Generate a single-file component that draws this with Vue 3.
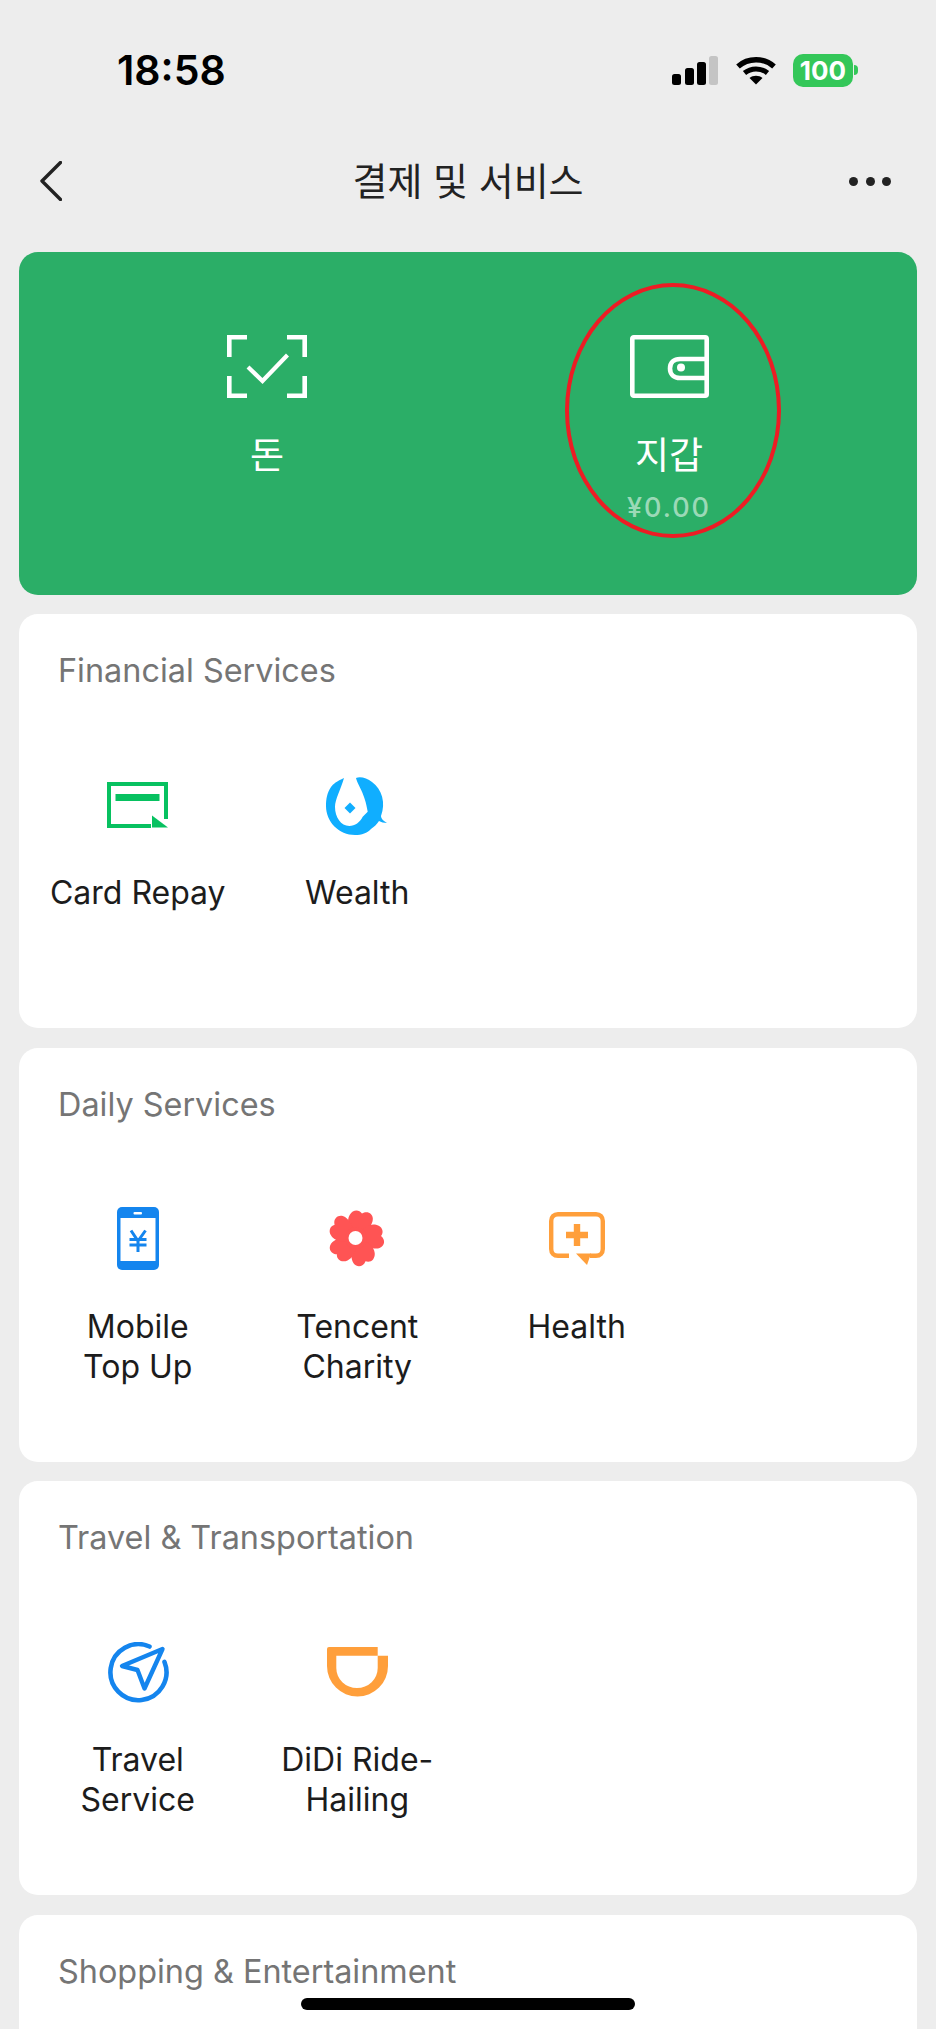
<template>
  <div class="page">
    <div class="status-bar">
      <span class="time">18:58</span>
      <div class="status-icons">
        <svg class="signal" width="46" height="29" viewBox="0 0 46 29">
          <rect x="0" y="18" width="9" height="11" rx="2.5" fill="#000" />
          <rect x="13" y="12" width="9" height="17" rx="2.5" fill="#000" />
          <rect x="25" y="6" width="9" height="23" rx="2.5" fill="#000" />
          <rect x="37" y="0" width="9" height="29" rx="2.5" fill="#c4c4c4" />
        </svg>
        <svg class="wifi" width="40" height="29" viewBox="0 0 40 29" fill="none">
          <path d="M2 10.5C12 1.5 28 1.5 38 10.5" stroke="#000" stroke-width="5.4" />
          <path d="M8.5 17C15 11.5 25 11.5 31.5 17" stroke="#000" stroke-width="5" />
          <path d="M20 28.5L13.5 22C17 19 23 19 26.5 22Z" fill="#000" />
        </svg>
        <div class="battery">
          <span class="battery-level">100</span>
          <span class="battery-nub"></span>
        </div>
      </div>
    </div>

    <div class="nav">
      <svg class="back" width="22" height="40" viewBox="0 0 22 40" fill="none">
        <path d="M20.5 1.5L2 20L20.5 38.5" stroke="#222" stroke-width="3.4" stroke-linecap="round" stroke-linejoin="round" />
      </svg>
      <h1 class="nav-title">결제 및 서비스</h1>
      <div class="more">
        <span></span><span></span><span></span>
      </div>
    </div>

    <div class="pay-card">
      <div class="pay-item">
        <svg width="80" height="63" viewBox="0 0 80 63" fill="none" stroke="#fff" stroke-width="4.6">
          <path d="M20 2.3H2.3V22" />
          <path d="M60 2.3H77.7V22" />
          <path d="M2.3 41V60.7H20" />
          <path d="M77.7 41V60.7H60" />
          <path d="M21 32L35.5 46L60.5 20" stroke-width="4.2" />
        </svg>
        <span class="pay-label">돈</span>
      </div>
      <div class="pay-item">
        <svg width="79" height="63" viewBox="0 0 79 63" fill="none" stroke="#fff" stroke-width="4.6">
          <rect x="2.3" y="2.3" width="74.4" height="58.4" rx="1.5" />
          <path d="M76 24H50C44 24 40 27.5 40 33.5C40 39.5 44 43 50 43H76" />
          <circle cx="51" cy="32.5" r="4" fill="#fff" stroke="none" />
        </svg>
        <span class="pay-label">지갑</span>
        <span class="pay-amount">¥0.00</span>
      </div>
      <div class="highlight"></div>
    </div>

    <section v-for="section in sections" :key="section.title" class="service-card">
      <h2 class="service-title">{{ section.title }}</h2>
      <div class="service-grid">
        <div v-for="item in section.items" :key="item.icon" class="service-item">
          <div class="service-icon">
            <svg v-if="item.icon === 'card'" width="61" height="46" viewBox="0 0 61 46" fill="none">
              <path d="M59 37V2H2V44H44" stroke="#07c160" stroke-width="4" />
              <rect x="8.5" y="12" width="44" height="7" fill="#07c160" />
              <path d="M45 33.5L61 45.5H45Z" fill="#07c160" />
            </svg>
            <svg v-else-if="item.icon === 'wealth'" width="62" height="60" viewBox="0 0 62 60">
              <path fill="#10aeff" d="M18 3C11 6 7 9 5 12C1 18 0 24 0 31C0 47 13 60 29 60C36 60 41 58 45 54C48 52 51 49 53 46C55 47 58 48 61 48C58 46 55 44 55 41C60 28 56 14 46 7C41 3 34 1 30 3C32 11 39 18 41.7 36.7L36.7 41.7C34 47 29 51 23.3 51C15 51 9 42 9 32C9 24 15 14 18 3Z" />
              <path fill="#10aeff" d="M24 27.5L29.5 33L24 38.5L18.5 33Z" />
            </svg>
            <svg v-else-if="item.icon === 'phone'" width="42" height="63" viewBox="0 0 42 63">
              <rect width="42" height="63" rx="5" fill="#1485ee" />
              <rect x="3.5" y="11" width="35" height="43" fill="#fff" />
              <rect x="16.5" y="5" width="8.5" height="2.4" rx="1" fill="#fff" />
              <path d="M14 23.5L21 34L28.5 23.5M12.5 32.5H29.5M12.5 38H29.5M21 34V45" fill="none" stroke="#1485ee" stroke-width="3" />
            </svg>
            <svg v-else-if="item.icon === 'flower'" width="58" height="59" viewBox="0 0 58 59">
              <path
                v-for="angle in petalAngles"
                :key="angle"
                :transform="`rotate(${angle} 28 29)`"
                fill="#ff5454"
                d="M28 29C19 22 16 13 18.5 7C21 1 27 0 30.5 4C35 0 41 2 42 7.5C43 14 37 22 28 29Z"
              />
              <circle cx="28" cy="29" r="11" fill="#ff5454" />
              <circle cx="27.5" cy="29" r="7" fill="#fff" />
            </svg>
            <svg v-else-if="item.icon === 'health'" width="56" height="53" viewBox="0 0 56 53" fill="none">
              <path d="M20 43.8H9C4.8 43.8 2.2 41 2.2 37V9C2.2 5 4.8 2.2 9 2.2H47C51.2 2.2 53.8 5 53.8 9V37C53.8 41 51.2 43.8 47 43.8H41" stroke="#ff9f3b" stroke-width="4.4" />
              <path d="M27 41.5H42L38 53Z" fill="#ff9f3b" />
              <path d="M28 12V34M17 23H39" stroke="#ff9f3b" stroke-width="6.4" />
            </svg>
            <svg v-else-if="item.icon === 'compass'" width="62" height="61" viewBox="0 0 62 61" fill="none">
              <path d="M42.5 4.5A28 28 0 1 0 57.5 20" stroke="#1485ee" stroke-width="4.6" stroke-linecap="round" />
              <path d="M55.5 7L15 24L30.5 28L37.5 46.5Z" stroke="#1485ee" stroke-width="4.4" stroke-linejoin="round" />
            </svg>
            <svg v-else-if="item.icon === 'didi'" width="61" height="50" viewBox="0 0 61 50">
              <path fill="#ff9f3b" fill-rule="evenodd" d="M0 2Q0 0 2 0H50.7V8.7H61V19A30.5 30.5 0 0 1 0 19ZM9.3 8.7V21A20.7 20 0 0 0 50.7 21V8.7Z" />
            </svg>
          </div>
          <span class="service-label">{{ item.label }}</span>
        </div>
      </div>
    </section>

    <div class="home-bar"></div>
  </div>
</template>

<script setup>
const petalAngles = [8, 80, 152, 224, 296]

const sections = [
  {
    title: 'Financial Services',
    items: [
      { icon: 'card', label: 'Card Repay' },
      { icon: 'wealth', label: 'Wealth' }
    ]
  },
  {
    title: 'Daily Services',
    items: [
      { icon: 'phone', label: 'Mobile\nTop Up' },
      { icon: 'flower', label: 'Tencent\nCharity' },
      { icon: 'health', label: 'Health' }
    ]
  },
  {
    title: 'Travel & Transportation',
    items: [
      { icon: 'compass', label: 'Travel\nService' },
      { icon: 'didi', label: 'DiDi Ride-\nHailing' }
    ]
  },
  {
    title: 'Shopping & Entertainment',
    items: []
  }
]
</script>

<style>
html,
body {
  margin: 0;
  background: #ededed;
  overflow: hidden;
}
</style>

<style scoped>
.page {
  position: relative;
  height: 2029px;
  overflow: hidden;
  background: #ededed;
  font-family: Inter, "Noto Sans CJK KR", sans-serif;
  color: #1c1c1c;
}
.status-bar {
  height: 80px;
  padding: 30px 83px 0 117px;
  display: flex;
  align-items: center;
  justify-content: space-between;
}
.time {
  font-size: 41px;
  font-weight: 600;
  color: #000;
}
.status-icons {
  display: flex;
  align-items: center;
}
.wifi {
  margin-left: 18px;
}
.battery {
  margin-left: 17px;
  width: 60px;
  height: 33px;
  border-radius: 10px;
  background: #34c759;
  position: relative;
  display: flex;
  align-items: center;
  justify-content: center;
}
.battery-level {
  font-size: 26px;
  font-weight: 700;
  color: #fff;
}
.battery-nub {
  position: absolute;
  right: -5px;
  top: 11px;
  width: 4px;
  height: 10px;
  border-radius: 0 4px 4px 0;
  background: #34c759;
}
.nav {
  height: 142px;
  padding: 0 45px 0 40px;
  display: grid;
  grid-template-columns: 1fr auto 1fr;
  align-items: center;
}
.nav-title {
  margin: 0 0 5px 5px;
  font-size: 38px;
  font-weight: 400;
  color: #222;
}
.more {
  justify-self: end;
  display: flex;
  gap: 7.5px;
}
.more span {
  width: 9px;
  height: 9px;
  border-radius: 50%;
  background: #222;
}
.pay-card {
  position: relative;
  margin: 0 19px;
  height: 343px;
  padding: 83px 47px 0;
  box-sizing: border-box;
  border-radius: 19px;
  background: #2bae67;
  display: grid;
  grid-template-columns: 1fr 1fr;
}
.pay-item {
  display: flex;
  flex-direction: column;
  align-items: center;
  color: #fff;
}
.pay-label {
  margin-top: 36px;
  font-size: 37px;
  line-height: 44px;
}
.pay-amount {
  margin-top: 12px;
  font-size: 27px;
  font-weight: 500;
  line-height: 36px;
  letter-spacing: 2px;
  color: rgba(255, 255, 255, 0.55);
}
.highlight {
  position: absolute;
  left: 546px;
  top: 31px;
  width: 216px;
  height: 255px;
  box-sizing: border-box;
  border: 4px solid #ed1c24;
  border-radius: 50%;
}
.service-card {
  margin: 19.4px 19px 0;
  height: 414px;
  box-sizing: border-box;
  padding: 35px 9px 0;
  border-radius: 19px;
  background: #fff;
}
.service-title {
  margin: 0 0 0 30px;
  font-size: 32.4px;
  line-height: 44px;
  font-weight: 400;
  color: #757575;
}
.service-grid {
  margin-top: 72px;
  display: grid;
  grid-template-columns: repeat(4, 219.5px);
}
.service-item {
  display: flex;
  flex-direction: column;
  align-items: center;
}
.service-icon {
  height: 80px;
  display: flex;
  align-items: center;
  justify-content: center;
}
.service-label {
  margin-top: 28px;
  font-size: 32px;
  line-height: 40px;
  text-align: center;
  white-space: pre-line;
}
.home-bar {
  position: absolute;
  left: 301px;
  top: 1998px;
  width: 334px;
  height: 12px;
  border-radius: 6px;
  background: #000;
}
</style>
